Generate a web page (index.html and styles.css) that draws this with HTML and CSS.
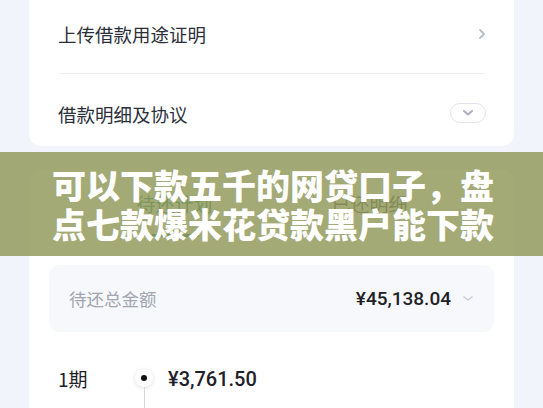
FILE: index.html
```html
<!DOCTYPE html>
<html>
<head>
<meta charset="utf-8">
<link rel="stylesheet" href="styles.css">
</head>
<body>

<div class="page">
  <div class="card top-card">
    <div class="menu-row first-row">
      <span class="menu-label">上传借款用途证明</span>
      <svg class="arrow-right" width="8" height="12" viewBox="0 0 8 12"><polyline points="2,2 6,6 2,10" fill="none" stroke="#b9bdc9" stroke-width="1.8" stroke-linecap="round" stroke-linejoin="round"/></svg>
    </div>
    <div class="menu-row second-row">
      <span class="menu-label">借款明细及协议</span>
      <span class="toggle-pill">
        <svg width="12" height="8" viewBox="0 0 12 8"><polyline points="2,2 6,5.5 10,2" fill="none" stroke="#a8adbf" stroke-width="2" stroke-linecap="round" stroke-linejoin="round"/></svg>
      </span>
    </div>
  </div>

  <div class="card plan-card">
    <div class="tab-row">
      <div class="tab active">待还计划<span class="tab-bar"></span></div>
      <div class="tab">已还明细</div>
    </div>

    <div class="total-box">
      <span class="total-label">待还总金额</span>
      <span class="total-amount">¥45,138.04</span>
      <svg class="arrow-down" width="12" height="8" viewBox="0 0 12 8"><polyline points="2,2 6,5 10,2" fill="none" stroke="#c9ccd6" stroke-width="1.5" stroke-linecap="round" stroke-linejoin="round"/></svg>
    </div>

    <div class="plan-item">
      <div class="plan-left">
        <div class="period">1期</div>
        <div class="plan-date">2024/04/20</div>
      </div>
      <div class="timeline">
        <span class="dot-ring"><span class="dot"></span></span>
        <span class="line"></span>
      </div>
      <div class="plan-right">
        <div class="plan-amount">¥3,761.50</div>
        <div class="plan-detail">本金 ¥3,600.00　利息 ¥161.50</div>
      </div>
    </div>
  </div>
</div>

<div class="banner">
  <div class="banner-title">可以下款五千的网贷口子，盘<br>点七款爆米花贷款黑户能下款</div>
</div>

</body>
</html>
```

FILE: styles.css
```css
body {
  margin: 0;
  background-color: #f2f4fb;
  font-family: "Noto Sans CJK SC", "Noto Sans", sans-serif;
  height: 408px;
  overflow: hidden;
  position: relative;
}

.page {
  padding: 0 29px;
}

.card {
  background-color: #ffffff;
}

.top-card {
  margin-top: -6px;
  border-radius: 0 0 12px 12px;
  padding: 0 28px 0 29px;
}

.menu-row {
  display: flex;
  align-items: center;
  justify-content: space-between;
}

.first-row {
  height: 79px;
  border-bottom: 1px solid #eceef3;
}

.second-row {
  height: 64px;
  padding-top: 8px;
}

.menu-label {
  color: #2b2f3a;
  font-size: 18.5px;
}

.toggle-pill {
  width: 34px;
  height: 18px;
  border: 1px solid #e2e4eb;
  border-radius: 10px;
  display: flex;
  align-items: center;
  justify-content: center;
  margin-top: -2px;
}

.plan-card {
  margin-top: 23px;
  border-radius: 12px;
  padding: 0 20px;
  height: 300px;
}

.tab-row {
  display: flex;
  height: 70px;
  margin: 0 27px 0 28px;
}

.tab {
  flex: 1;
  text-align: center;
  font-size: 19px;
  line-height: 24px;
  padding-top: 23px;
  color: #4a4d57;
  position: relative;
}

.tab.active {
  color: #17907c;
}

.tab-bar {
  position: absolute;
  left: 50%;
  bottom: 2px;
  width: 48px;
  height: 3px;
  margin-left: -24px;
  border-radius: 2px;
  background-color: #17907c;
}

.total-box {
  margin-top: 26px;
  height: 67px;
  background-color: #f7f8fb;
  border-radius: 10px;
  display: flex;
  align-items: center;
  padding: 0 20px;
}

.total-label {
  color: #a2a5af;
  font-size: 17.5px;
  flex: 1;
}

.total-amount {
  color: #1f2129;
  font-family: Roboto, "Noto Sans", sans-serif;
  font-size: 19px;
  font-weight: 500;
  margin-right: 11px;
}

.plan-item {
  display: flex;
  margin-top: 35px;
  padding-left: 9px;
}

.plan-left {
  width: 77px;
}

.period {
  color: #1f2129;
  font-size: 19px;
  line-height: 24px;
}

.plan-date,
.plan-detail {
  color: #a2a5af;
  font-size: 15px;
  line-height: 20px;
  margin-top: 14px;
}

.timeline {
  width: 18px;
  display: flex;
  flex-direction: column;
  align-items: center;
  padding-top: 2px;
}

.dot-ring {
  width: 18px;
  height: 18px;
  border-radius: 50%;
  background-color: #ffffff;
  box-shadow: 0 1px 4px rgba(40, 50, 90, 0.15);
  display: flex;
  align-items: center;
  justify-content: center;
}

.dot {
  width: 6px;
  height: 6px;
  border-radius: 50%;
  background-color: #111111;
}

.line {
  width: 1px;
  height: 60px;
  background-color: #d4d7e0;
}

.plan-right {
  margin-left: 15px;
}

.plan-amount {
  color: #1f2129;
  font-family: Roboto, "Noto Sans", sans-serif;
  font-size: 20px;
  font-weight: 500;
  line-height: 24px;
}

.banner {
  position: absolute;
  left: 0;
  top: 152px;
  width: 543px;
  height: 104px;
  background-color: rgba(143, 151, 88, 0.82);
  display: flex;
  align-items: center;
  justify-content: center;
}

.banner-title {
  color: #ffffff;
  font-size: 34px;
  font-weight: 900;
  line-height: 39px;
  text-align: center;
  padding-left: 3px;
}
```
